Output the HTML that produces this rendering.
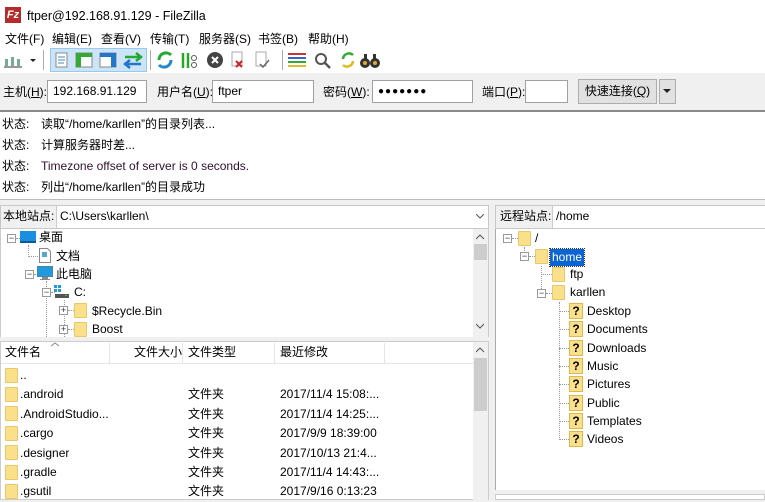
<!DOCTYPE html>
<html><head><meta charset="utf-8"><style>
*{margin:0;padding:0;box-sizing:border-box}
body{width:765px;height:500px;overflow:hidden;background:#f0f0f0;font-family:"Liberation Sans","Noto Sans CJK SC",sans-serif;font-size:12px;color:#000;position:relative;line-height:16px}
.a{position:absolute;white-space:nowrap}
.in{position:absolute;background:#fff;border:1px solid #a0a0a0;height:23px;line-height:21px;padding-left:5px;font-size:12px}
.fd{position:absolute;width:13px;height:15px;background:#fbe08c;border:1px solid #e8c86a;border-radius:1px}
.q{position:absolute;width:14px;height:16px;background:#fbe08c;border:1px solid #e0b84a;font-weight:bold;font-size:12px;line-height:14px;text-align:center}
.pm{position:absolute;width:9px;height:9px;border:1px solid #999;background:#fff;font-size:9px;line-height:7px;text-align:center;color:#333}
.dl{position:absolute;border-left:1px dotted #999}
.dh{position:absolute;border-top:1px dotted #999}
</style></head><body>
<div class="a" style="left:0;top:0;width:765px;height:30px;background:#fff"></div>
<div class="a" style="left:5px;top:7px;width:16px;height:16px;background:#b52a2a;color:#fff;font-size:11px;font-weight:bold;text-align:center;line-height:16px;font-style:italic">Fz</div>
<div class="a" style="left:27px;top:8px;font-size:12.5px">ftper@192.168.91.129 - FileZilla</div>
<div class="a" style="left:0;top:30px;width:765px;height:17px;background:#fff"></div>
<div class="a" style="left:5px;top:31px">文件(F)</div>
<div class="a" style="left:52px;top:31px">编辑(E)</div>
<div class="a" style="left:101px;top:31px">查看(V)</div>
<div class="a" style="left:150px;top:31px">传输(T)</div>
<div class="a" style="left:199px;top:31px">服务器(S)</div>
<div class="a" style="left:258px;top:31px">书签(B)</div>
<div class="a" style="left:308px;top:31px">帮助(H)</div>
<!-- toolbar -->
<div class="a" style="left:0;top:47px;width:765px;height:26px;background:#fff"></div>
<svg class="a" style="left:2px;top:49px" width="40" height="22"><g fill="#7a9" ><rect x="3" y="10" width="3" height="7"/><rect x="9" y="8" width="3" height="9"/><rect x="15" y="10" width="3" height="7"/><rect x="2" y="17" width="18" height="2" fill="#999"/></g><path d="M28 10h6l-3 3z" fill="#222"/></svg>
<div class="a" style="left:43px;top:50px;width:1px;height:20px;background:#aaa"></div>
<div class="a" style="left:50px;top:48px;width:97px;height:24px;background:#cce4f7;border:1px solid #99c9ef"></div>
<svg class="a" style="left:50px;top:49px" width="100" height="22"><rect x="6" y="4" width="11" height="14" fill="#fff" stroke="#888"/><path d="M8 8h7M8 11h7M8 14h6" stroke="#48a"/>
<rect x="26" y="4" width="16" height="14" fill="#fff" stroke="#888"/><rect x="26" y="4" width="16" height="4" fill="#3a3"/><rect x="26" y="4" width="5" height="14" fill="#3a3"/>
<rect x="50" y="4" width="16" height="14" fill="#fff" stroke="#888"/><rect x="50" y="4" width="16" height="4" fill="#27c"/><rect x="61" y="4" width="5" height="14" fill="#27c"/>
<path d="M75 8h16M86 4l5 4-5 4" stroke="#2a3" stroke-width="2.5" fill="none"/><path d="M91 15H75M80 11l-5 4 5 4" stroke="#27c" stroke-width="2.5" fill="none"/></svg>
<div class="a" style="left:150px;top:50px;width:1px;height:20px;background:#aaa"></div>
<svg class="a" style="left:154px;top:49px" width="130" height="22"><path d="M5 11a7 7 0 0 1 12-5" stroke="#2a3" stroke-width="3" fill="none"/><path d="M17 11a7 7 0 0 1-12 5" stroke="#28c" stroke-width="3" fill="none"/>
<path d="M29 4v15M34 4v15" stroke="#2a2" stroke-width="2.5"/><circle cx="40" cy="9" r="2.5" fill="none" stroke="#555"/><circle cx="40" cy="16" r="2.5" fill="none" stroke="#555"/>
<circle cx="61" cy="11" r="8" fill="#444"/><path d="M58 8l6 6M64 8l-6 6" stroke="#fff" stroke-width="2"/>
<rect x="78" y="3" width="10" height="14" fill="#fff" stroke="#aaa"/><path d="M82 12l6 6M88 12l-6 6" stroke="#c22" stroke-width="2"/>
<rect x="102" y="3" width="10" height="14" fill="#fff" stroke="#aaa"/><path d="M106 15l3 3 6-7" stroke="#666" stroke-width="1.5" fill="none"/></svg>
<div class="a" style="left:282px;top:50px;width:1px;height:20px;background:#aaa"></div>
<svg class="a" style="left:285px;top:49px" width="100" height="22"><path d="M3 5h18" stroke="#c33" stroke-width="2"/><path d="M3 9h18" stroke="#36c" stroke-width="2"/><path d="M3 13h18" stroke="#3a3" stroke-width="2"/><path d="M3 17h18" stroke="#db3" stroke-width="2"/>
<circle cx="36" cy="10" r="5" fill="none" stroke="#555" stroke-width="2"/><path d="M40 14l5 5" stroke="#555" stroke-width="2.5"/>
<path d="M58 10a6 6 0 0 1 10-4" stroke="#3a3" stroke-width="2.5" fill="none"/><path d="M68 12a6 6 0 0 1-10 4" stroke="#db2" stroke-width="2.5" fill="none"/>
<circle cx="80" cy="14" r="5" fill="#333"/><circle cx="90" cy="14" r="5" fill="#333"/><circle cx="80" cy="14" r="2" fill="#da3"/><circle cx="90" cy="14" r="2" fill="#da3"/><rect x="79" y="5" width="3" height="6" fill="#333"/><rect x="88" y="5" width="3" height="6" fill="#333"/></svg>
<!-- quickconnect -->
<div class="a" style="left:3px;top:84px">主机(<u>H</u>):</div>
<div class="in" style="left:47px;top:80px;width:100px">192.168.91.129</div>
<div class="a" style="left:157px;top:84px">用户名(<u>U</u>):</div>
<div class="in" style="left:212px;top:80px;width:102px">ftper</div>
<div class="a" style="left:323px;top:84px">密码(<u>W</u>):</div>
<div class="in" style="left:372px;top:80px;width:101px;font-size:10px;letter-spacing:1px">●●●●●●●</div>
<div class="a" style="left:482px;top:84px">端口(<u>P</u>):</div>
<div class="in" style="left:525px;top:80px;width:43px"></div>
<div class="a" style="left:578px;top:79px;width:79px;height:25px;background:#e1e1e1;border:1px solid #adadad;text-align:center;line-height:23px">快速连接(<u>Q</u>)</div>
<div class="a" style="left:659px;top:79px;width:17px;height:25px;background:#e1e1e1;border:1px solid #adadad"></div>
<svg class="a" style="left:663px;top:89px" width="9" height="5"><path d="M0 0h8l-4 4z" fill="#222"/></svg>
<div class="a" style="left:0;top:110px;width:765px;height:2px;background:#8a8a8a"></div>
<!-- log -->
<div class="a" style="left:0;top:112px;width:765px;height:87px;background:#fff"></div>
<div class="a" style="left:2px;top:114px;line-height:21px">状态:<br>状态:<br>状态:<br>状态:</div>
<div class="a" style="left:41px;top:114px;line-height:21px">读取“/home/karllen”的目录列表...<br>计算服务器时差...<br><span style="color:#301030">Timezone offset of server is 0 seconds.</span><br>列出“/home/karllen”的目录成功</div>
<div class="a" style="left:0;top:199px;width:765px;height:1px;background:#bbb"></div>
<!-- local -->
<div class="a" style="left:0;top:205px;width:489px;height:24px;border:1px solid #c8c8c8;background:#f0f0f0"></div>
<div class="a" style="left:3px;top:208px;line-height:16px">本地站点:</div>
<div class="a" style="left:56px;top:206px;width:432px;height:22px;background:#fff;border-left:1px solid #ccc;padding-left:3px;line-height:21px">C:\Users\karllen\</div>
<svg class="a" style="left:476px;top:214px" width="9" height="6"><path d="M0 0l4 4 4-4" stroke="#555" fill="none"/></svg>
<div class="a" style="left:0;top:229px;width:489px;height:108px;background:#fff;border-left:1px solid #ccc;border-right:1px solid #ccc"></div>
<div class="a" style="left:473px;top:229px;width:15px;height:108px;background:#f0f0f0"></div>
<div class="a" style="left:474px;top:244px;width:13px;height:16px;background:#cdcdcd"></div>
<svg class="a" style="left:476px;top:234px" width="9" height="100"><path d="M0 5l4-4 4 4" stroke="#555" fill="none"/><path d="M0 90l4 4 4-4" stroke="#555" fill="none"/></svg>
<div class="pm" style="left:7px;top:234px">−</div><div class="dh" style="left:16px;top:238px;width:4px"></div>
<div class="a" style="left:20px;top:231px;width:16px;height:12px;background:#1a8fe0;border-bottom:2px solid #0b5a9a"></div>
<div class="a" style="left:39px;top:229px">桌面</div>
<div class="dl" style="left:28px;top:245px;height:12px"></div><div class="dh" style="left:28px;top:256px;width:10px"></div>
<svg class="a" style="left:39px;top:248px" width="12" height="15"><path d="M.5.5h8l3 3v11h-11z" fill="#fff" stroke="#888"/><rect x="3" y="4" width="5" height="5" fill="#5ac"/></svg>
<div class="a" style="left:56px;top:248px">文档</div>
<div class="pm" style="left:25px;top:270px">−</div><div class="dh" style="left:34px;top:274px;width:4px"></div>
<svg class="a" style="left:37px;top:266px" width="16" height="15"><rect x=".5" y=".5" width="15" height="10" fill="#29d" stroke="#48a"/><rect x="5" y="11" width="6" height="2" fill="#888"/><rect x="3" y="13" width="10" height="1" fill="#888"/></svg>
<div class="a" style="left:56px;top:266px">此电脑</div>
<div class="dl" style="left:46px;top:281px;height:56px"></div>
<div class="pm" style="left:42px;top:288px">−</div><div class="dh" style="left:51px;top:292px;width:4px"></div>
<svg class="a" style="left:54px;top:285px" width="16" height="14"><rect x="0" y="0" width="3" height="3" fill="#29d"/><rect x="4" y="0" width="3" height="3" fill="#29d"/><rect x="0" y="4" width="3" height="3" fill="#29d"/><rect x="4" y="4" width="3" height="3" fill="#29d"/><rect x="1" y="9" width="14" height="4" fill="#555"/><rect x="11" y="10" width="2" height="1" fill="#3c3"/></svg>
<div class="a" style="left:74px;top:284px">C:</div>
<div class="dl" style="left:64px;top:300px;height:37px"></div>
<div class="pm" style="left:59px;top:306px">+</div><div class="dh" style="left:68px;top:310px;width:6px"></div>
<div class="fd" style="left:74px;top:303px"></div><div class="a" style="left:92px;top:303px">$Recycle.Bin</div>
<div class="pm" style="left:59px;top:325px">+</div><div class="dh" style="left:68px;top:329px;width:6px"></div>
<div class="fd" style="left:74px;top:322px"></div><div class="a" style="left:92px;top:321px">Boost</div>
<!-- local list -->
<div class="a" style="left:0;top:341px;width:489px;height:159px;background:#fff;border:1px solid #ccc"></div>
<div class="a" style="left:1px;top:342px;width:472px;height:22px;background:#fff;border-bottom:1px solid #e5e5e5"></div>
<div class="a" style="left:109px;top:343px;width:1px;height:21px;background:#e5e5e5"></div>
<div class="a" style="left:182px;top:343px;width:1px;height:21px;background:#e5e5e5"></div>
<div class="a" style="left:274px;top:343px;width:1px;height:21px;background:#e5e5e5"></div>
<div class="a" style="left:384px;top:343px;width:1px;height:21px;background:#e5e5e5"></div>
<svg class="a" style="left:51px;top:342px" width="9" height="5"><path d="M0 4l4-3 4 3" stroke="#888" fill="none"/></svg>
<div class="a" style="left:5px;top:344px">文件名</div>
<div class="a" style="left:134px;top:344px">文件大小</div>
<div class="a" style="left:188px;top:344px">文件类型</div>
<div class="a" style="left:280px;top:344px">最近修改</div>
<div class="a" style="left:473px;top:342px;width:15px;height:158px;background:#f0f0f0"></div>
<div class="a" style="left:474px;top:358px;width:13px;height:53px;background:#cdcdcd"></div>
<svg class="a" style="left:476px;top:347px" width="9" height="6"><path d="M0 5l4-4 4 4" stroke="#555" fill="none"/></svg>
<div style="position:absolute;left:0;top:366px;line-height:19.4px">
<div class="fd" style="left:5px;top:2px"></div>
<div class="fd" style="left:5px;top:21px"></div>
<div class="fd" style="left:5px;top:40px"></div>
<div class="fd" style="left:5px;top:60px"></div>
<div class="fd" style="left:5px;top:79px"></div>
<div class="fd" style="left:5px;top:99px"></div>
<div class="fd" style="left:5px;top:118px"></div>
<div class="a" style="left:20px;top:0">..<br>.android<br>.AndroidStudio...<br>.cargo<br>.designer<br>.gradle<br>.gsutil</div>
<div class="a" style="left:188px;top:0"><br>文件夹<br>文件夹<br>文件夹<br>文件夹<br>文件夹<br>文件夹</div>
<div class="a" style="left:280px;top:0"><br>2017/11/4 15:08:...<br>2017/11/4 14:25:...<br>2017/9/9 18:39:00<br>2017/10/13 21:4...<br>2017/11/4 14:43:...<br>2017/9/16 0:13:23</div>
</div>
<!-- remote -->
<div class="a" style="left:495px;top:205px;width:270px;height:24px;border:1px solid #c8c8c8;background:#f0f0f0"></div>
<div class="a" style="left:500px;top:208px;line-height:16px">远程站点:</div>
<div class="a" style="left:552px;top:206px;width:213px;height:22px;background:#fff;border-left:1px solid #ccc;padding-left:3px;line-height:21px">/home</div>
<div class="a" style="left:495px;top:229px;width:270px;height:261px;background:#fff;border-left:1px solid #aaa"></div>
<div class="pm" style="left:503px;top:234px">−</div><div class="dh" style="left:512px;top:238px;width:6px"></div>
<div class="fd" style="left:518px;top:231px"></div><div class="a" style="left:535px;top:230px">/</div>
<div class="dl" style="left:524px;top:247px;height:8px"></div>
<div class="pm" style="left:520px;top:252px">−</div><div class="dh" style="left:529px;top:256px;width:6px"></div>
<div class="fd" style="left:535px;top:249px"></div>
<div class="a" style="left:550px;top:249px;height:17px;padding:0 2px;background:#0a64d2;color:#fff;outline:1px dotted #333;line-height:16px">home</div>
<div class="dl" style="left:541px;top:266px;height:27px"></div>
<div class="dh" style="left:541px;top:274px;width:11px"></div>
<div class="fd" style="left:552px;top:267px"></div><div class="a" style="left:570px;top:266px">ftp</div>
<div class="pm" style="left:537px;top:289px">−</div><div class="dh" style="left:546px;top:293px;width:6px"></div>
<div class="fd" style="left:552px;top:285px"></div><div class="a" style="left:570px;top:284px">karllen</div>
<div class="dl" style="left:559px;top:302px;height:138px"></div>
<div style="position:absolute;left:0;top:303px">
<div class="dh" style="left:559px;top:8px;width:10px"></div><div class="q" style="left:569px;top:0">?</div><div class="a" style="left:587px;top:0">Desktop</div>
<div class="dh" style="left:559px;top:26px;width:10px"></div><div class="q" style="left:569px;top:18px">?</div><div class="a" style="left:587px;top:18px">Documents</div>
<div class="dh" style="left:559px;top:45px;width:10px"></div><div class="q" style="left:569px;top:37px">?</div><div class="a" style="left:587px;top:37px">Downloads</div>
<div class="dh" style="left:559px;top:63px;width:10px"></div><div class="q" style="left:569px;top:55px">?</div><div class="a" style="left:587px;top:55px">Music</div>
<div class="dh" style="left:559px;top:81px;width:10px"></div><div class="q" style="left:569px;top:73px">?</div><div class="a" style="left:587px;top:73px">Pictures</div>
<div class="dh" style="left:559px;top:100px;width:10px"></div><div class="q" style="left:569px;top:92px">?</div><div class="a" style="left:587px;top:92px">Public</div>
<div class="dh" style="left:559px;top:118px;width:10px"></div><div class="q" style="left:569px;top:110px">?</div><div class="a" style="left:587px;top:110px">Templates</div>
<div class="dh" style="left:559px;top:136px;width:10px"></div><div class="q" style="left:569px;top:128px">?</div><div class="a" style="left:587px;top:128px">Videos</div>
</div>
<div class="a" style="left:495px;top:494px;width:270px;height:6px;background:#fff;border:1px solid #ccc"></div>
</body></html>
